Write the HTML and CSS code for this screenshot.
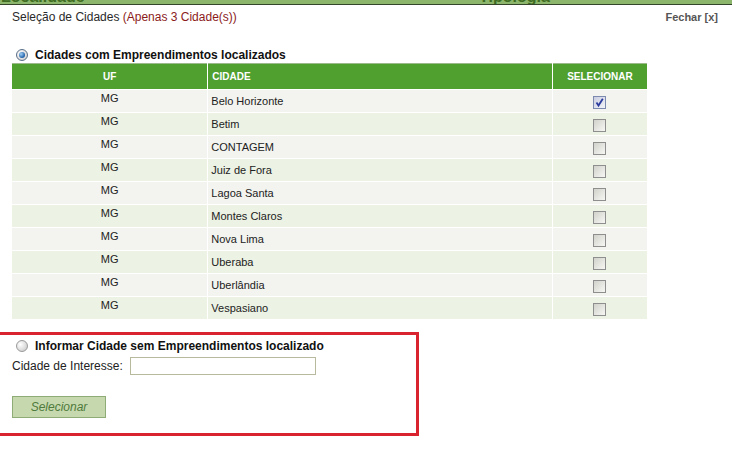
FILE: index.html
```html
<!DOCTYPE html>
<html lang="pt-BR">
<head>
    <meta charset="UTF-8">
    <title>Seleção de Cidades</title>
    <link rel="stylesheet" href="styles.css">
</head>
<body>
    <div class="tabs">
        <span class="tab tab-first">Localidade</span>
        <span class="tab tab-second">Tipologia</span>
    </div>

    <div class="header">
        <div class="title">Seleção de Cidades <span class="limit">(Apenas 3 Cidade(s))</span></div>
        <a class="close" href="#">Fechar [x]</a>
    </div>

    <div class="option">
        <span class="radio checked"></span>
        <span class="option-label">Cidades com Empreendimentos localizados</span>
    </div>

    <table class="cities">
        <thead>
            <tr>
                <th class="col-uf">UF</th>
                <th class="col-city">CIDADE</th>
                <th class="col-sel">SELECIONAR</th>
            </tr>
        </thead>
        <tbody>
            <tr><td class="uf">MG</td><td class="city">Belo Horizonte</td><td class="sel"><span class="check checked"><svg width="11" height="11" viewBox="0 0 11 11"><path d="M2.5 5.5 L4.5 8.5 L8.8 1.8" fill="none" stroke="#2b3c9e" stroke-width="1.8"/></svg></span></td></tr>
            <tr><td class="uf">MG</td><td class="city">Betim</td><td class="sel"><span class="check"></span></td></tr>
            <tr><td class="uf">MG</td><td class="city">CONTAGEM</td><td class="sel"><span class="check"></span></td></tr>
            <tr><td class="uf">MG</td><td class="city">Juiz de Fora</td><td class="sel"><span class="check"></span></td></tr>
            <tr><td class="uf">MG</td><td class="city">Lagoa Santa</td><td class="sel"><span class="check"></span></td></tr>
            <tr><td class="uf">MG</td><td class="city">Montes Claros</td><td class="sel"><span class="check"></span></td></tr>
            <tr><td class="uf">MG</td><td class="city">Nova Lima</td><td class="sel"><span class="check"></span></td></tr>
            <tr><td class="uf">MG</td><td class="city">Uberaba</td><td class="sel"><span class="check"></span></td></tr>
            <tr><td class="uf">MG</td><td class="city">Uberlândia</td><td class="sel"><span class="check"></span></td></tr>
            <tr><td class="uf">MG</td><td class="city">Vespasiano</td><td class="sel"><span class="check"></span></td></tr>
        </tbody>
    </table>

    <div class="other-box">
        <div class="option">
            <span class="radio"></span>
            <span class="option-label">Informar Cidade sem Empreendimentos localizado</span>
        </div>
        <div class="field">
            <label for="city-input">Cidade de Interesse:</label>
            <input type="text" id="city-input">
        </div>
        <button class="btn">Selecionar</button>
    </div>
</body>
</html>
```

FILE: styles.css
```css
body {
    margin: 0;
    font-family: "Liberation Sans", Arial, sans-serif;
    font-size: 12px;
    color: #222;
    background: #fff;
    overflow: hidden;
}
.tabs {
    height: 4px;
    background: #8cb66c;
    border-bottom: 1px solid #34452a;
    overflow: hidden;
    display: flex;
}
.tab {
    font-size: 16px;
    font-weight: bold;
    color: #3e6c22;
    line-height: 16px;
    margin-top: -11px;
}
.tab-first { padding-left: 1px; width: 236px; }
.tab-second { padding-left: 242px; }
.header {
    display: flex;
    justify-content: space-between;
    align-items: center;
    padding: 5px 14px 0 12px;
}
.title { color: #2a2a2a; }
.limit { color: #8b1b1b; }
.close {
    font-size: 11px;
    font-weight: bold;
    color: #555;
    text-decoration: none;
}
.option {
    display: flex;
    align-items: center;
    margin: 24px 0 0 16px;
}
.option-label {
    font-weight: bold;
    color: #111;
    margin-left: 7px;
}
.radio {
    width: 12px;
    height: 12px;
    border-radius: 50%;
    box-sizing: border-box;
    border: 1px solid #9a9a9a;
    background: radial-gradient(circle at 35% 35%, #ffffff, #d6d6d6 70%, #b8b8b8);
    position: relative;
}
.radio.checked { border-color: #5b6f88; }
.radio.checked::after {
    content: "";
    position: absolute;
    left: 2px;
    top: 2px;
    width: 6px;
    height: 6px;
    border-radius: 50%;
    background: radial-gradient(circle at 35% 35%, #9fd0f5, #1f5fa8 70%, #123f78);
}
.cities {
    margin-left: 11px;
    width: 637px;
    border-collapse: separate;
    border-spacing: 1px;
    font-size: 11px;
}
.cities th {
    background: #4fa02f;
    color: #fff;
    font-size: 10px;
    font-weight: bold;
    height: 25px;
    padding: 0;
    border-top: 1px solid #9bb98a;
}
.col-uf { width: 195px; }
.col-city { text-align: left; padding-left: 4px !important; width: 339px; }
.col-sel { width: 94px; }
.cities td {
    height: 22px;
    padding: 0;
    background: #f3f4ef;
    color: #222;
}
.cities tbody tr:nth-child(even) td { background: #ecf2e4; }
.uf {
    text-align: center;
    vertical-align: top;
    padding-top: 2px !important;
    height: 20px !important;
}
.city {
    padding-left: 3px !important;
    vertical-align: bottom;
    padding-bottom: 5px !important;
    height: 17px !important;
}
.sel { text-align: center; }
.check {
    display: inline-block;
    width: 13px;
    height: 13px;
    box-sizing: border-box;
    border: 1px solid #8e8e8e;
    background: linear-gradient(135deg, #d2d2cc, #f6f6f3);
    vertical-align: middle;
    margin-top: 2px;
}
.check.checked {
    border-color: #7c8ab0;
    background: linear-gradient(135deg, #c9cde0, #f3f4f8);
}
.check svg { display: block; }
.other-box {
    margin: 12px 0 0 -3px;
    width: 422px;
    border: 3px solid #d9232e;
    padding: 0 0 15px 0;
    box-sizing: border-box;
}
.other-box .option { margin: 4px 0 0 16px; }
.field {
    display: flex;
    align-items: center;
    margin: 4px 0 0 12px;
    color: #222;
}
.field input {
    margin: 0 0 0 7px;
    width: 186px;
    height: 18px;
    box-sizing: border-box;
    border: 1px solid #b9b99e;
    padding: 0 3px;
}
.btn {
    display: block;
    margin: 21px 0 0 12px;
    width: 94px;
    height: 22px;
    background: #c6d9ae;
    border: 1px solid #8fab76;
    color: #4f7a3c;
    font-family: "Liberation Sans", Arial, sans-serif;
    font-size: 12px;
    font-style: italic;
    padding: 0;
}
```
